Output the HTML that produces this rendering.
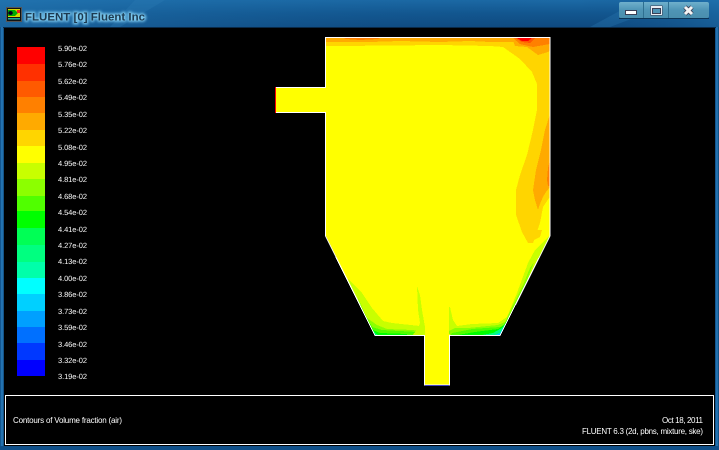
<!DOCTYPE html>
<html><head><meta charset="utf-8"><style>
html,body{margin:0;padding:0;width:719px;height:450px;overflow:hidden;background:#000}
svg{display:block}
text{font-family:"Liberation Sans",sans-serif}
</style></head><body>
<svg width="719" height="450" viewBox="0 0 719 450" xmlns="http://www.w3.org/2000/svg">
<defs>
<linearGradient id="tb" x1="0" y1="0" x2="0" y2="1"><stop offset="0" stop-color="#1c6aa6"/><stop offset=".5" stop-color="#12568f"/><stop offset="1" stop-color="#0f4a80"/></linearGradient>
<linearGradient id="tb2" x1="0" y1="0" x2="1" y2="0"><stop offset="0" stop-color="#2478b4" stop-opacity=".6"/><stop offset=".4" stop-color="#1c6aa6" stop-opacity=".2"/><stop offset=".8" stop-color="#0f4a80" stop-opacity="0"/><stop offset="1" stop-color="#2478b4" stop-opacity=".4"/></linearGradient>
<linearGradient id="btn" x1="0" y1="0" x2="0" y2="1"><stop offset="0" stop-color="#6fb0cc"/><stop offset=".5" stop-color="#4f95b6"/><stop offset="1" stop-color="#4a8fae"/></linearGradient>
<linearGradient id="side" x1="0" y1="0" x2="1" y2="0"><stop offset="0" stop-color="#0d4a80"/><stop offset=".5" stop-color="#2a7fc0"/><stop offset="1" stop-color="#0d4474"/></linearGradient>
<clipPath id="dom"><path d="M326 38H549.500V236L500 335H449.500V385H425V335H375L326 236V112H276V87H326Z"/></clipPath>
<filter id="glow" x="-10%" y="-50%" width="120%" height="200%"><feGaussianBlur stdDeviation="1.200"/></filter>
</defs>
<!-- window frame -->
<rect width="719" height="450" fill="#0f4c82"/>
<rect width="719" height="27" fill="url(#tb)"/>
<rect width="719" height="27" fill="url(#tb2)"/>
<path d="M110 27L135 0H165L120 27Z" fill="#2f7fb5" opacity=".3"/>
<path d="M590 27L625 8H660L610 27Z" fill="#2f7fb5" opacity=".3"/>
<rect x="0" y="27" width="4" height="423" fill="url(#side)"/>
<rect x="715" y="27" width="4" height="423" fill="url(#side)"/>
<rect x="0" y="446" width="719" height="4" fill="#0f4f88"/>
<rect x="3" y="27" width="713" height="1" fill="#0a2a48"/>
<rect x="4" y="28" width="711" height="418" fill="#000"/>

<!-- app icon -->
<rect x="6" y="7" width="16" height="15" fill="#555"/>
<rect x="7" y="8" width="14" height="13" fill="#111"/>
<rect x="8" y="9" width="12" height="8" fill="#d8d800"/>
<path d="M8 10h7l3 3-3 3H8z" fill="#0a0"/>
<ellipse cx="10.500" cy="13" rx="2.300" ry="2" fill="#002"/>
<rect x="17" y="10" width="3" height="3" fill="#e22"/>
<rect x="8" y="18" width="12" height="1.500" fill="#2a9"/>

<!-- title -->
<text x="25" y="20.500" font-size="11" font-weight="bold" fill="#7cc8ee" stroke="#7cc8ee" stroke-width="2.500" filter="url(#glow)" textLength="120" lengthAdjust="spacingAndGlyphs">FLUENT [0] Fluent Inc</text>
<text x="25" y="20.500" font-size="11" font-weight="bold" fill="#1d3a50" textLength="120" lengthAdjust="spacingAndGlyphs">FLUENT [0] Fluent Inc</text>

<!-- window buttons -->
<rect x="619" y="2" width="90" height="16" rx="2" fill="url(#btn)"/>
<rect x="619" y="18" width="90" height="1" fill="#0b3558"/>
<rect x="643" y="2" width="1" height="16" fill="#2e6f90"/>
<rect x="668" y="2" width="1" height="16" fill="#2e6f90"/>
<rect x="625.500" y="10.500" width="11" height="4" fill="#fff" stroke="#3a3f55"/>
<rect x="650.500" y="5.500" width="12" height="10" fill="#3a3f55"/>
<rect x="651" y="6" width="11" height="9" fill="#e8ecf2"/>
<rect x="652.500" y="8.500" width="8" height="5" fill="#4f95b6" stroke="#3a3f55"/>
<path d="M685 7L692 14M692 7L685 14" stroke="#3a3f55" stroke-width="4.500" fill="none"/>
<path d="M685 7L692 14M692 7L685 14" stroke="#f4f4f4" stroke-width="3" fill="none"/>

<!-- legend bar -->
<g shape-rendering="crispEdges">
<rect x="17" y="47" width="28" height="17" fill="#ff0000"/>
<rect x="17" y="64" width="28" height="17" fill="#ff3000"/>
<rect x="17" y="81" width="28" height="16" fill="#ff5a00"/>
<rect x="17" y="97" width="28" height="16" fill="#ff8000"/>
<rect x="17" y="113" width="28" height="17" fill="#ffaa00"/>
<rect x="17" y="130" width="28" height="16" fill="#ffd500"/>
<rect x="17" y="146" width="28" height="17" fill="#ffff00"/>
<rect x="17" y="163" width="28" height="16" fill="#c8ff00"/>
<rect x="17" y="179" width="28" height="17" fill="#8cff00"/>
<rect x="17" y="196" width="28" height="15" fill="#50ff00"/>
<rect x="17" y="211" width="28" height="17" fill="#00ff00"/>
<rect x="17" y="228" width="28" height="17" fill="#00ff55"/>
<rect x="17" y="245" width="28" height="17" fill="#00ff80"/>
<rect x="17" y="262" width="28" height="16" fill="#00ffaa"/>
<rect x="17" y="278" width="28" height="16" fill="#00ffff"/>
<rect x="17" y="294" width="28" height="17" fill="#00d0ff"/>
<rect x="17" y="311" width="28" height="16" fill="#00a0ff"/>
<rect x="17" y="327" width="28" height="16" fill="#0070ff"/>
<rect x="17" y="343" width="28" height="17" fill="#0038ff"/>
<rect x="17" y="360" width="28" height="16" fill="#0000ff"/>
</g>

<!-- legend labels -->
<g font-size="7.500" fill="#fff" style="text-rendering:geometricPrecision">
<text x="58" y="51" textLength="29">5.90e-02</text>
<text x="58" y="67" textLength="29">5.76e-02</text>
<text x="58" y="84" textLength="29">5.62e-02</text>
<text x="58" y="100" textLength="29">5.49e-02</text>
<text x="58" y="117" textLength="29">5.35e-02</text>
<text x="58" y="133" textLength="29">5.22e-02</text>
<text x="58" y="150" textLength="29">5.08e-02</text>
<text x="58" y="166" textLength="29">4.95e-02</text>
<text x="58" y="182" textLength="29">4.81e-02</text>
<text x="58" y="199" textLength="29">4.68e-02</text>
<text x="58" y="215" textLength="29">4.54e-02</text>
<text x="58" y="232" textLength="29">4.41e-02</text>
<text x="58" y="248" textLength="29">4.27e-02</text>
<text x="58" y="264" textLength="29">4.13e-02</text>
<text x="58" y="281" textLength="29">4.00e-02</text>
<text x="58" y="297" textLength="29">3.86e-02</text>
<text x="58" y="314" textLength="29">3.73e-02</text>
<text x="58" y="330" textLength="29">3.59e-02</text>
<text x="58" y="347" textLength="29">3.46e-02</text>
<text x="58" y="363" textLength="29">3.32e-02</text>
<text x="58" y="379" textLength="29">3.19e-02</text>
</g>

<!-- contour plot -->
<g clip-path="url(#dom)" shape-rendering="crispEdges">
<rect x="270" y="30" width="290" height="360" fill="#ffff00"/>
<!-- top band + right side light orange, wrapping around the yellow core -->
<path d="M326 38H550V198L549 198L543 207L540 223L533 243L528 243L522 232L516 215V190L520 175L527 155L533 130L537 110V84L532 72L520 59L503 47L490 46L440 45L340 46L326 46Z" fill="#ffd500"/>
<!-- blob at the foot of the plume -->
<path d="M522 230L528 243L540 237L542 230Z" fill="#ffd500"/>
<!-- top orange strip -->
<path d="M326 38H515V42L490 42L470 41L440 42L400 41L370 42L345 42L326 42Z" fill="#ffaa00"/>
<path d="M344 38H380L378 39L360 40L346 39Z" fill="#ff8000"/>
<!-- top right hot spot -->
<path d="M512 38L515 46L527 47L538 55L548 52L550 50V38Z" fill="#ffaa00"/>
<path d="M513 38L520 44L533 47L550 44V38Z" fill="#ff8000"/>
<path d="M515 38L522 42L530 43L535 38Z" fill="#ff5500"/>
<path d="M517 38L522 41L528 41L532 38Z" fill="#ff0000"/>
<!-- right wall orange streak -->
<path d="M550 114L545 130L541 150L536 170L533 190L535 200L538 210L540 204L543 197L546 192L550 187Z" fill="#ffaa00"/>
<path d="M550 160L548 168L547 180L548 186L550 186Z" fill="#ff8000"/>

<!-- left hopper wall bands -->
<path d="M348 279L362 293L372 308L383 321L392 323L420 326L425 336H360Z" fill="#c8ff00"/>
<path d="M358 298L367 318L377 325L387 329L413 330L425 333V338H365Z" fill="#8cff00"/>
<path d="M365 314L372 327L382 330L417 332L425 336V338H370Z" fill="#50ff00"/>
<path d="M370 324L373 330L380 333L407 334V338H372Z" fill="#00ff00"/>
<path d="M372 330L375 333L378 335V338H372Z" fill="#00ff80"/>
<path d="M373 333L376 336H373Z" fill="#00d0ff"/>

<!-- right hopper wall bands -->
<path d="M549 236L535 250L528 263L517 293L507 317L498 323L472 324L457 326L453 320L450 307H449V338H505L555 238Z" fill="#c8ff00"/>
<path d="M534 262L530 268L523 285L513 305L505 322L498 325L468 328L455 328L449 331V338H505Z" fill="#8cff00"/>
<path d="M516 302L507 323L500 327L472 329L452 333L449 338H505Z" fill="#50ff00"/>
<path d="M510 315L504 325L498 329L475 332L458 335V338H505Z" fill="#00ff00"/>
<path d="M505 324L502 328L493 333L482 335V338H503Z" fill="#00ff80"/>
<path d="M503 328L500 333L495 335V338H502Z" fill="#00d0ff"/>

<!-- plume beside outlet, left -->
<path d="M417 286L420 295L422 310L425 327V336H412L418 328L420 323L418 310Z" fill="#c8ff00"/>
<!-- outlet duct -->
<rect x="425" y="334" width="25" height="52" fill="#ffff00"/>
</g>

<!-- domain outline -->
<path d="M325.500 87.500V37.500H550V236L500 335.500H449.500V385H424.500V335.500H375L325.500 236V112.500H276M325.500 87.500H276" fill="none" stroke="#fff" stroke-width="1" shape-rendering="crispEdges"/>
<rect x="275" y="87" width="1" height="26" fill="#f00"/>
<rect x="425" y="385" width="24" height="1" fill="#4444cc"/>

<!-- bottom info box -->
<rect x="5.500" y="395.500" width="708" height="49" fill="none" stroke="#fff" shape-rendering="crispEdges"/>
<g font-size="8" fill="#fff">
<text x="13" y="423" textLength="109">Contours of Volume fraction (air)</text>
<text x="703" y="423" text-anchor="end" textLength="41">Oct 18, 2011</text>
<text x="703" y="434" text-anchor="end" textLength="121">FLUENT 6.3 (2d, pbns, mixture, ske)</text>
</g>
</svg>
</body></html>
